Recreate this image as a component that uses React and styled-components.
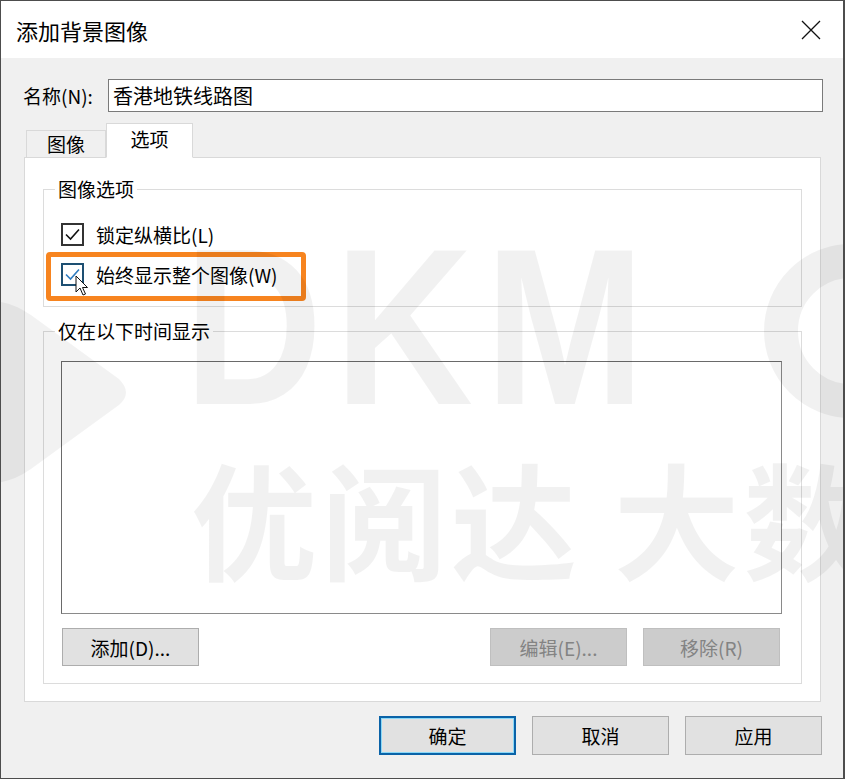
import React from 'react'
import styled, { createGlobalStyle } from 'styled-components'

const GlobalStyle = createGlobalStyle`
  html, body {
    margin: 0;
    padding: 0;
    background: #ffffff;
  }
  * {
    box-sizing: border-box;
  }
`

const Window = styled.div`
  position: relative;
  width: 845px;
  height: 779px;
  border: 1px solid #4d4d4d;
  border-right-width: 2px;
  background: #f0f0f0;
  display: flex;
  flex-direction: column;
  overflow: hidden;
  font-family: "Noto Sans CJK SC", "Noto Sans", sans-serif;
  color: #000;
`

const TitleBar = styled.div`
  height: 57px;
  background: #ffffff;
  display: flex;
  align-items: center;
  justify-content: space-between;
  padding: 0 22px 0 15px;
`

const Title = styled.h1`
  margin: 0;
  font-size: 22px;
  font-weight: 400;
  line-height: 1;
`

const CloseButton = styled.button`
  border: 0;
  background: transparent;
  padding: 0;
  width: 20px;
  height: 20px;
  display: flex;
  align-items: center;
  justify-content: center;
`

const Body = styled.div`
  flex: 1;
  display: flex;
  flex-direction: column;
  padding: 0 20px 0 22px;
`

const NameRow = styled.div`
  margin-top: 21px;
  display: flex;
  align-items: center;
  height: 33px;
`

const NameLabel = styled.label`
  width: 85px;
  font-size: 19px;
`

const NameInput = styled.div`
  flex: 1;
  height: 33px;
  background: #fff;
  border: 1px solid #7a7a7a;
  display: flex;
  align-items: center;
  padding-left: 4px;
  font-size: 20px;
`

const TabStrip = styled.div`
  margin-top: 11px;
  height: 34px;
  padding-left: 3px;
  display: flex;
  align-items: flex-end;
`

const Tab = styled.div`
  position: relative;
  z-index: ${p => (p.$active ? 2 : 1)};
  width: ${p => (p.$active ? 87 : 80)}px;
  height: ${p => (p.$active ? 35 : 28)}px;
  margin-bottom: -1px;
  background: ${p => (p.$active ? '#ffffff' : '#f0f0f0')};
  border: 1px solid #d9d9d9;
  border-bottom: ${p => (p.$active ? '1px solid #ffffff' : '1px solid #d9d9d9')};
  display: flex;
  align-items: center;
  justify-content: center;
  padding-bottom: ${p => (p.$active ? 4 : 1)}px;
  font-size: 19px;
`

const Panel = styled.div`
  position: relative;
  z-index: 1;
  margin: 0 2px 0 1px;
  height: 545px;
  background: #ffffff;
  border: 1px solid #d9d9d9;
  padding: 18px 18px 0 18px;
  display: flex;
  flex-direction: column;
  gap: 11px;
`

const Group = styled.fieldset`
  margin: 0;
  padding: 0;
  border: 1px solid #dcdcdc;
  min-width: 0;
`

const Legend = styled.legend`
  margin-left: 11px;
  padding: 0 3px;
  font-size: 19px;
  line-height: 26px;
`

const GroupContent = styled.div`
  display: flex;
  flex-direction: column;
  gap: ${p => p.$gap || 0}px;
  padding: ${p => p.$pad};
`

const CheckRow = styled.div`
  position: relative;
  display: flex;
  align-items: center;
  gap: 12px;
  height: 30px;
  font-size: 19px;
`

const Box = styled.span`
  width: 23px;
  height: 23px;
  border: 2px solid ${p => (p.$hover ? '#1d4f72' : '#333333')};
  background: #fff;
  display: flex;
  align-items: center;
  justify-content: center;
`

const Highlight = styled.div`
  position: absolute;
  left: -15px;
  top: -7px;
  width: 260px;
  height: 49px;
  border: 5px solid #f7841f;
  border-radius: 4px;
  pointer-events: none;
`

const Cursor = styled.svg`
  position: absolute;
  left: 14px;
  top: 16px;
`

const ListBox = styled.div`
  height: 253px;
  margin-right: 1px;
  background: #fff;
  border: 1px solid #8a8a8a;
  border-top-color: #6a6a6a;
  border-left-color: #6a6a6a;
`

const ButtonRow = styled.div`
  margin-top: 14px;
  display: flex;
  gap: 16px;
  padding: 0 3px 0 1px;
`

const Spacer = styled.div`
  flex: 1;
`

const Button = styled.button`
  width: 137px;
  height: ${p => p.$h || 38}px;
  background: ${p => (p.$disabled ? '#cccccc' : '#e1e1e1')};
  border: 1px solid ${p => (p.$disabled ? '#bfbfbf' : '#adadad')};
  color: ${p => (p.$disabled ? '#838383' : '#000')};
  font-family: inherit;
  font-size: 19px;
  padding: 0;
  ${p => p.$default && `
    border: 2px solid #0a63a8;
    box-shadow: inset 0 0 0 1px #8ad8f7;
  `}
`

const Footer = styled.div`
  margin-top: 14px;
  padding-right: 1px;
  display: flex;
  justify-content: flex-end;
  gap: 16px;
`

const Watermark = styled.div`
  position: absolute;
  inset: 0;
  pointer-events: none;
  z-index: 10;
  color: rgba(0, 0, 0, 0.055);
`

const MarkLatin = styled.div`
  position: absolute;
  left: 183px;
  top: 214px;
  font-family: "Liberation Sans", Arial, sans-serif;
  font-weight: 700;
  font-size: 223px;
  line-height: 1;
  letter-spacing: 14px;
  white-space: nowrap;
  transform: scaleX(0.86);
  transform-origin: left top;
`

const MarkHan = styled.div`
  position: absolute;
  left: 190px;
  top: 452px;
  font-family: "Noto Sans CJK SC", sans-serif;
  font-weight: 700;
  font-size: 126px;
  line-height: 1;
  letter-spacing: 4px;
  white-space: pre;
`

const MarkShape = styled.svg`
  position: absolute;
  left: 0;
  top: 0;
`

const Check = ({ color }) => (
  <svg width="19" height="19" viewBox="0 0 19 19">
    <polyline points="3,9.5 7.5,14 16,4.5" fill="none" stroke={color} strokeWidth="1.6" />
  </svg>
)

const App = () => {
  return (
    <>
      <GlobalStyle />
      <Window>
        <TitleBar>
          <Title>添加背景图像</Title>
          <CloseButton aria-label="关闭">
            <svg width="20" height="20" viewBox="0 0 20 20">
              <path d="M1 1 L19 19 M19 1 L1 19" stroke="#111" strokeWidth="1.3" />
            </svg>
          </CloseButton>
        </TitleBar>
        <Body>
          <NameRow>
            <NameLabel>名称(N):</NameLabel>
            <NameInput>香港地铁线路图</NameInput>
          </NameRow>
          <TabStrip>
            <Tab>图像</Tab>
            <Tab $active>选项</Tab>
          </TabStrip>
          <Panel>
            <Group>
              <Legend>图像选项</Legend>
              <GroupContent $gap={10} $pad="17px 0 17px 17px">
                <CheckRow>
                  <Box><Check color="#111" /></Box>
                  锁定纵横比(L)
                </CheckRow>
                <CheckRow>
                  <Box $hover><Check color="#2f7cc0" /></Box>
                  始终显示整个图像(W)
                  <Highlight />
                  <Cursor width="14" height="22" viewBox="0 0 14 22">
                    <path d="M1 1 L1 17 L5 13 L8 20 L10.5 19 L7.5 12.5 L12.5 12.5 Z" fill="#fff" stroke="#111" strokeWidth="1" />
                  </Cursor>
                </CheckRow>
              </GroupContent>
            </Group>
            <Group>
              <Legend>仅在以下时间显示</Legend>
              <GroupContent $pad="17px 18px 17px 17px">
                <ListBox />
                <ButtonRow>
                  <Button>添加(D)...</Button>
                  <Spacer />
                  <Button $disabled>编辑(E)...</Button>
                  <Button $disabled>移除(R)</Button>
                </ButtonRow>
              </GroupContent>
            </Group>
          </Panel>
          <Footer>
            <Button $h={39} $default>确定</Button>
            <Button $h={39}>取消</Button>
            <Button $h={39}>应用</Button>
          </Footer>
        </Body>
        <Watermark>
          <MarkShape width="845" height="779" viewBox="0 0 845 779">
            <path d="M-10 300 Q 10 300 30 314 L 118 378 Q 132 392 118 404 L 30 468 Q 10 482 -10 482 Z" fill="rgba(0,0,0,0.05)" />
            <circle cx="850" cy="330" r="70" fill="none" stroke="rgba(0,0,0,0.055)" strokeWidth="34" />
          </MarkShape>
          <MarkLatin>DKM</MarkLatin>
          <MarkHan>{'优阅达 大数'}</MarkHan>
        </Watermark>
      </Window>
    </>
  )
}

export default App
